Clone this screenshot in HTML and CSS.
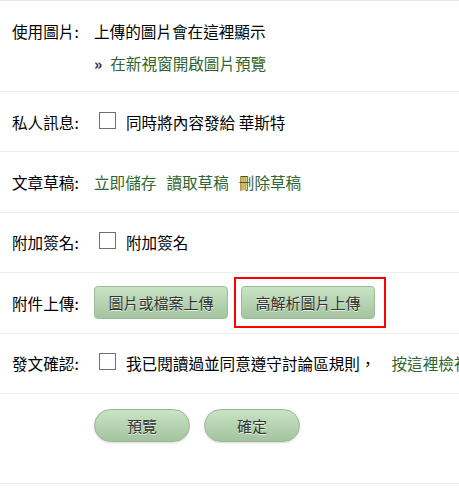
FILE: index.html
```html
<!DOCTYPE html>
<html lang="zh-Hant">
<head>
    <meta charset="UTF-8">
    <meta name="viewport" content="width=device-width, initial-scale=1.0">
    <title>發表文章</title>
    <link rel="stylesheet" href="styles.css">
</head>
<body>
    <div class="post-form">
        <div class="form-row row-tall">
            <div class="form-label">使用圖片:</div>
            <div class="form-field field-stack">
                <div>上傳的圖片會在這裡顯示</div>
                <div><span class="raquo">»</span><a href="#" class="link">在新視窗開啟圖片預覽</a></div>
            </div>
        </div>
        <div class="form-row">
            <div class="form-label">私人訊息:</div>
            <div class="form-field">
                <label class="check"><input type="checkbox">同時將內容發給 華斯特</label>
            </div>
        </div>
        <div class="form-row">
            <div class="form-label">文章草稿:</div>
            <div class="form-field links">
                <a href="#" class="link">立即儲存</a>
                <a href="#" class="link">讀取草稿</a>
                <a href="#" class="link">刪除草稿</a>
            </div>
        </div>
        <div class="form-row">
            <div class="form-label">附加簽名:</div>
            <div class="form-field">
                <label class="check"><input type="checkbox">附加簽名</label>
            </div>
        </div>
        <div class="form-row">
            <div class="form-label">附件上傳:</div>
            <div class="form-field buttons">
                <button class="btn">圖片或檔案上傳</button>
                <span class="highlight"><button class="btn">高解析圖片上傳</button></span>
            </div>
        </div>
        <div class="form-row">
            <div class="form-label">發文確認:</div>
            <div class="form-field">
                <label class="check"><input type="checkbox">我已閱讀過並同意遵守討論區規則，</label>
                <a href="#" class="link rules">按這裡檢視討論區規則</a>
            </div>
        </div>
        <div class="form-row row-submit">
            <div class="form-label"></div>
            <div class="form-field buttons submit">
                <button class="btn pill">預覽</button>
                <button class="btn pill">確定</button>
            </div>
        </div>
    </div>
</body>
</html>
```

FILE: styles.css
```css
html, body {
    margin: 0;
    padding: 0;
    background: #fff;
    overflow: hidden;
}
body {
    font-family: "Noto Sans CJK TC", "Liberation Sans", sans-serif;
    font-size: 15.6px;
    color: #000;
}
.post-form {
    border-top: 1px solid #e8e8e8;
    width: 600px;
}
.form-row {
    display: flex;
    align-items: center;
    min-height: 59.4px;
    border-bottom: 1px solid #ececec;
    white-space: nowrap;
    line-height: 24px;
}
.row-tall {
    align-items: flex-start;
    padding: 18px 0 16px;
    min-height: 0;
}
.form-label {
    flex: 0 0 94px;
    box-sizing: border-box;
    padding-left: 12px;
}
.form-field {
    display: flex;
    align-items: center;
}
.field-stack {
    flex-direction: column;
    align-items: flex-start;
    gap: 8px;
}
.raquo {
    color: #1c2a5a;
    font-weight: bold;
    margin-right: 8px;
}
.link {
    color: #2f662f;
    text-decoration: none;
}
.links {
    gap: 10px;
}
.check {
    display: flex;
    align-items: center;
}
.check input {
    appearance: none;
    width: 17px;
    height: 17px;
    margin: 0 10px 3px 5px;
    border: 1px solid #707070;
    background: #fff;
}
.rules {
    margin-left: 16px;
}
.buttons {
    gap: 13px;
}
.btn {
    font-family: inherit;
    font-size: 15px;
    color: #333;
    width: 134px;
    height: 33px;
    border: 1px solid #9dbb98;
    border-radius: 4px;
    background: linear-gradient(#c9e4c4, #a2c49e);
    text-shadow: 0 1px 0 #e6f2e3;
    padding: 0;
}
.highlight {
    position: relative;
    display: inline-flex;
}
.highlight::after {
    content: "";
    position: absolute;
    top: -9px;
    left: -7px;
    right: -11px;
    bottom: -9px;
    border: 2px solid #f00;
}
.row-submit {
    align-items: flex-start;
    padding: 15px 0 0;
    min-height: 74px;
}
.submit {
    gap: 14px;
}
.pill {
    width: 96px;
    height: 33px;
    border-radius: 17px;
    border-color: #99b394;
    box-shadow: 0 1px 2px rgba(0, 0, 0, 0.15);
}
```
